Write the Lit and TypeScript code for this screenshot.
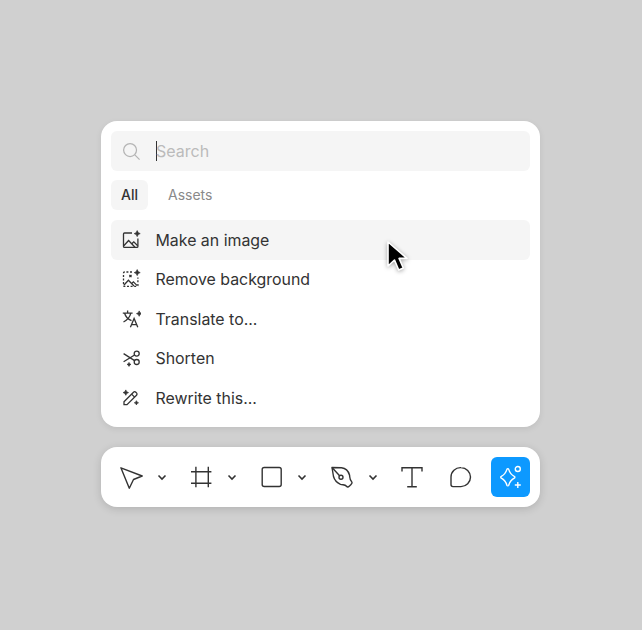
import { LitElement, html, css, svg } from 'lit';
import { customElement } from 'lit/decorators.js';

const spark = (x: number, y: number, r: number) =>
  svg`<path d="M${x} ${y - r}Q${x + r * 0.15} ${y - r * 0.15} ${x + r} ${y}Q${x + r * 0.15} ${y + r * 0.15} ${x} ${y + r}Q${x - r * 0.15} ${y + r * 0.15} ${x - r} ${y}Q${x - r * 0.15} ${y - r * 0.15} ${x} ${y - r}Z" fill="currentColor" stroke="currentColor" stroke-width="0.7"/>`;

const menuIcons = {
  image: svg`<path d="M11 3H3.5a1 1 0 0 0-1 1v12.4a1 1 0 0 0 1 1h12.4a1 1 0 0 0 1-1V8.5"/><path d="M2.8 15.8 7.6 10.5 14 17.3"/><path d="M10.8 13.8l2-2 3.9 3.9"/>${spark(16.2, 3.6, 3)}`,
  remove: svg`<path d="M11 3H3.5a1 1 0 0 0-1 1v12.4a1 1 0 0 0 1 1h12.4a1 1 0 0 0 1-1V8.5" stroke-dasharray="2 1.6"/><path d="M2.8 16.2 7.4 11.2 13 17"/><path d="M10.8 14.4l1.6-1.6 3.8 3.8"/><path d="M8.4 6l2.1 2.1M10.5 6 8.4 8.1"/>${spark(16.2, 3.6, 3)}`,
  translate: svg`<path d="M1.8 4.2h9.8M6.6 1.6v2.6M9.8 4.2c-.8 3.6-3.1 6.6-7.3 8.8M3.6 4.2c.9 3.2 3.4 6.1 6.9 7.5"/><path d="M9.4 18.2l3.7-8.8 3.7 8.8M10.4 15.6h5.4"/>${spark(18.2, 4.6, 2.7)}`,
  shorten: svg`<circle cx="15.7" cy="5.6" r="2.5"/><circle cx="15.7" cy="14" r="2.5"/><path d="M13.6 7 2.6 13.8M13.6 12.6 2.6 5.6"/>${spark(8, 16.4, 2)}`,
  rewrite: svg`<path d="M3 13.7 12.5 4.2a1.6 1.6 0 0 1 2.3 0l.7.7a1.6 1.6 0 0 1 0 2.3L6 16.7H3Z"/><path d="M10.6 6.1l3 3"/>${spark(4.8, 4.6, 2.7)}${spark(15.4, 14.8, 2.1)}`,
};

const toolIcons = {
  move: svg`<path d="M1.9 2.8 23.2 11l-8.7 3.5-4.2 8.7Z" stroke-linejoin="round"/>`,
  frame: svg`<path d="M6.9 1.7v20.6M19.3 1.7v20.6M2 6.7h20.4M2 18.3h20.4"/>`,
  rect: svg`<rect x="2.2" y="2.5" width="19" height="19" rx="2"/>`,
  pen: svg`<path d="M2 2.5 11.5 2.8C15.5 3.2 18.5 6.5 19.5 10 20 12.5 19.5 14.5 21.5 16.5 22.8 17.8 21.5 19 20.5 20L19.5 21C18.5 22 17.5 22.5 16.5 21.3 14.8 19.3 13 20.2 10.5 19.3 7.5 18 4.5 15 3.5 11.5Z" stroke-linejoin="round"/><path d="M2 2.5 9.6 10.8"/><circle cx="11" cy="12.3" r="2"/>`,
  text: svg`<path d="M2 6.6V2.8h20v3.8M12 2.8v19M7.2 21.8h9.6"/>`,
  bubble: svg`<path d="M12 2.6a9.5 9.5 0 0 1 0 19H4a2 2 0 0 1-2-2v-7.5a9.5 9.5 0 0 1 10-9.5Z"/>`,
  ai: svg`<path d="M7.9 4.4a.95.95 0 0 1 1.8 0c.9 3 2.6 5.4 5.6 7a1 1 0 0 1 0 1.8c-3 1.6-4.7 4-5.6 7a.95.95 0 0 1-1.8 0c-.9-3-2.6-5.4-5.6-7a1 1 0 0 1 0-1.8c3-1.6 4.7-4 5.6-7Z" stroke-linejoin="round"/><circle cx="18.8" cy="4" r="2.5"/><path d="M18.8 17v6M15.8 20h6"/>`,
};

@customElement('app-root')
export class AppRoot extends LitElement {
  static styles = css`
    :host {
      display: block;
      height: 630px;
      background: #d0d0d0;
      font-family: Inter, 'Liberation Sans', sans-serif;
      color: #333;
      overflow: hidden;
    }
    .stage {
      position: relative;
      display: flex;
      flex-direction: column;
      align-items: flex-start;
      gap: 20px;
      padding: 121px 0 0 101px;
    }
    .panel {
      width: 419px;
      padding: 10px 10px 9.5px;
      background: #fff;
      border-radius: 16px;
      box-shadow: 0 2px 6px rgba(0, 0, 0, 0.08);
    }
    .search {
      display: flex;
      align-items: center;
      height: 40px;
      background: #f5f5f5;
      border-radius: 6px;
      color: #bbb;
      font-size: 16px;
    }
    .search-icon {
      width: 44.5px;
      display: flex;
      padding-left: 10.5px;
      box-sizing: border-box;
    }
    .caret {
      width: 1.5px;
      height: 20px;
      margin-right: -1px;
      background: #333;
    }
    .search svg {
      width: 19px;
      height: 19px;
      fill: none;
      stroke: #b4b4b4;
      stroke-width: 1.3;
    }
    .tabs {
      display: flex;
      align-items: center;
      gap: 10px;
      margin: 9px 0 10px;
      font-size: 14px;
    }
    .tab {
      height: 30px;
      line-height: 30px;
      padding: 0 10px;
      border-radius: 6px;
      color: #8a8a8a;
    }
    .tab.on {
      background: #f5f5f5;
      color: #333;
      font-weight: 500;
    }
    .item {
      display: flex;
      align-items: center;
      height: 39.5px;
      border-radius: 6px;
      font-size: 15.9px;
    }
    .item span {
      padding-top: 0.6px;
    }
    .item.on {
      background: #f5f5f5;
    }
    .item svg {
      width: 20px;
      height: 20px;
      margin: 0 14.5px 0 10px;
      fill: none;
      stroke: currentColor;
      stroke-width: 1.3;
    }
    .toolbar {
      width: 419px;
      height: 40px;
      padding: 10px;
      display: flex;
      gap: 10px;
      background: #fff;
      border-radius: 16px;
      box-shadow: 0 2px 8px rgba(0, 0, 0, 0.15);
    }
    .group {
      display: flex;
    }
    .tool {
      width: 40px;
      height: 40px;
      display: flex;
      align-items: center;
      justify-content: center;
    }
    .tool.text {
      width: 38.7px;
    }
    .tool svg {
      width: 24px;
      height: 24px;
      fill: none;
      stroke: currentColor;
      stroke-width: 1.4;
    }
    .chev {
      width: 20.33px;
      height: 40px;
      display: flex;
      align-items: center;
      justify-content: center;
    }
    .chev svg {
      width: 10px;
      height: 10px;
      margin-left: 1px;
      fill: none;
      stroke: #333;
      stroke-width: 1.6;
    }
    .tool.ai {
      width: 39px;
      background: #0d99ff;
      border-radius: 6px;
      color: #fff;
    }
    .cursor {
      position: absolute;
      left: 386px;
      top: 240px;
      width: 22px;
      height: 34px;
      filter: drop-shadow(0 1px 2px rgba(0, 0, 0, 0.35));
    }
  `;

  render() {
    const items = [
      ['Make an image', menuIcons.image],
      ['Remove background', menuIcons.remove],
      ['Translate to...', menuIcons.translate],
      ['Shorten', menuIcons.shorten],
      ['Rewrite this...', menuIcons.rewrite],
    ] as const;
    const tool = (icon: unknown, cls = '') => html`<div class="tool ${cls}"><svg viewBox="0 0 24 24">${icon}</svg></div>`;
    const chev = html`<div class="chev"><svg viewBox="0 0 10 10"><path d="M1.5 3.5 5 7l3.5-3.5" /></svg></div>`;
    return html`
      <div class="stage">
        <div class="panel">
          <div class="search">
            <div class="search-icon">
              <svg viewBox="0 0 20 20"><circle cx="8.5" cy="8.5" r="6.8" /><path d="M13.5 13.5 18.5 18.5" /></svg>
            </div>
            <span class="caret"></span><span>Search</span>
          </div>
          <div class="tabs">
            <div class="tab on">All</div>
            <div class="tab">Assets</div>
          </div>
          ${items.map(
            ([label, icon], i) => html`
              <div class="item ${i === 0 ? 'on' : ''}">
                <svg viewBox="0 0 20 20">${icon}</svg><span>${label}</span>
              </div>
            `,
          )}
        </div>
        <div class="toolbar">
          <div class="group">${tool(toolIcons.move)}${chev}</div>
          <div class="group">${tool(toolIcons.frame)}${chev}</div>
          <div class="group">${tool(toolIcons.rect)}${chev}</div>
          <div class="group">${tool(toolIcons.pen)}${chev}</div>
          ${tool(toolIcons.text, 'text')} ${tool(toolIcons.bubble)} ${tool(toolIcons.ai, 'ai')}
        </div>
        <svg class="cursor" viewBox="0 0 22 34">
          <path d="M2 2v24l6.5-6 4.2 10 4.6-2-4.2-9.6H21Z" fill="#000" stroke="#fff" stroke-width="1.6" stroke-linejoin="round" />
        </svg>
      </div>
    `;
  }
}
